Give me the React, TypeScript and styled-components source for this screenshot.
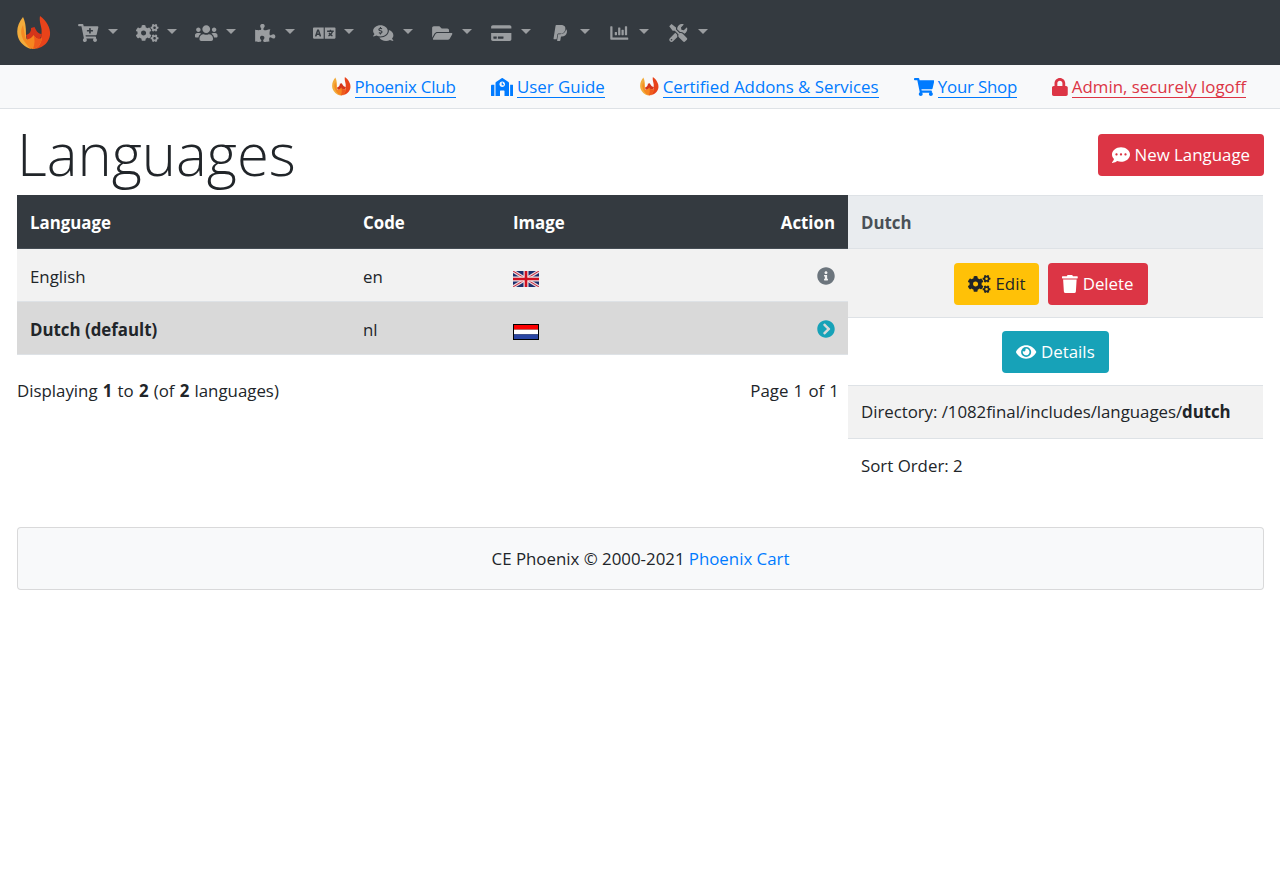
import React from 'react';
import styled, { createGlobalStyle } from 'styled-components';
import {
  FaCartPlus,
  FaCogs,
  FaUsers,
  FaPuzzlePiece,
  FaLanguage,
  FaCommentsDollar,
  FaFolderOpen,
  FaCreditCard,
  FaPaypal,
  FaChartBar,
  FaTools,
  FaSchool,
  FaShoppingCart,
  FaLock,
  FaCommentDots,
  FaTrash,
  FaEye,
  FaInfoCircle,
  FaChevronCircleRight,
} from 'react-icons/fa';

const GlobalStyle = createGlobalStyle`
  html, body {
    margin: 0;
    background: #fff;
  }
  body {
    font-family: "Open Sans", "Liberation Sans", sans-serif;
    font-size: 16.85px;
    line-height: 26px;
    color: #212529;
  }
  * { box-sizing: border-box; }
`;

const Logo: React.FC<{ size: number }> = ({ size }) => (
  <svg width={size} height={size} viewBox="0 0 34 34">
    <path d="M6 1 C1 7 -1 14 1 21 C3 27 8 31 14 33 C12 27 9 24 9 19 C9 14 9 7 6 1Z" fill="#f2ac3c" />
    <path d="M6 9 C3 14 4 20 7 25 C9 28 11 30 13 31 C10 26 8 22 7.5 17 Z" fill="#f58a22" />
    <path d="M23 0 C22 5 24 9 24.5 13 C25 19 24 26 19 33 C27 31 32 26 33 19 C34 12 29 4 23 0Z" fill="#e8431a" />
    <path d="M9 19 C12 18 13 17 14 14 L14 12 L17.5 11 L19 14 C20 16 22 18 25 18 L23 23 L10 23Z" fill="#d4351a" />
    <path d="M8 23 C11 24 14 23 16.5 19 C19 23 22 24 25 22 C24 28 21 33 16 33 C12 33 9 28 8 23Z" fill="#f6861f" />
    <path d="M16.5 19 C19 23 22 24 25 22 C24 28 21 32 16 33 C18 28 18 23 16.5 19Z" fill="#ee5a1c" />
  </svg>
);

const FlagSvg = styled.svg`
  display: block;
  width: 26px;
  height: 16px;
  margin-top: 3px;
`;

const UkFlag: React.FC = () => (
  <FlagSvg viewBox="0 0 26 16">
    <rect width="26" height="16" fill="#1c2f6e" />
    <path d="M0 0 L26 16 M26 0 L0 16" stroke="#e9d5da" strokeWidth="3.2" />
    <path d="M0 0 L26 16 M26 0 L0 16" stroke="#c8283c" strokeWidth="1" />
    <path d="M13 0 V16 M0 8 H26" stroke="#efe3e5" strokeWidth="5" />
    <path d="M13 0 V16 M0 8 H26" stroke="#cf1020" strokeWidth="2.6" />
  </FlagSvg>
);

const NlFlag: React.FC = () => (
  <FlagSvg viewBox="0 0 26 16">
    <rect width="26" height="16" fill="#000" />
    <rect x="1" y="1" width="24" height="4.6" fill="#fb0000" />
    <rect x="1" y="5.6" width="24" height="4.8" fill="#fff" />
    <rect x="1" y="10.4" width="24" height="4.6" fill="#2a46a4" />
  </FlagSvg>
);

const Navbar = styled.nav`
  display: flex;
  align-items: center;
  height: 65px;
  padding: 0 17px;
  background: #343a40;
`;

const Brand = styled.div`
  display: flex;
  margin-right: 26px;
`;

const NavItem = styled.div`
  display: flex;
  align-items: center;
  flex: 0 0 59px;
  color: rgba(255, 255, 255, 0.5);
  svg {
    width: 22.5px;
    height: 18px;
  }
`;

const Caret = styled.span`
  width: 0;
  height: 0;
  margin: 0 0 2px 8.5px;
  border-top: 5px solid rgba(255, 255, 255, 0.5);
  border-left: 5px solid transparent;
  border-right: 5px solid transparent;
`;

const SubBar = styled.div`
  display: flex;
  justify-content: flex-end;
  align-items: center;
  gap: 35px;
  height: 44px;
  padding: 0 34px 0 0;
  background: #f8f9fa;
  border-bottom: 1px solid #dee2e6;
`;

const SubLink = styled.a<{ $danger?: boolean; $iconWidth?: number }>`
  display: flex;
  align-items: center;
  gap: 4px;
  color: ${p => (p.$danger ? '#dc3545' : '#007bff')};
  svg {
    flex: none;
    width: ${p => p.$iconWidth ?? 19}px;
    height: ${p => (p.$iconWidth ? 18 : 19)}px;
  }
`;

const LinkText = styled.span<{ $tight?: boolean }>`
  padding-top: 1px;
  line-height: 21px;
  letter-spacing: ${p => (p.$tight ? '-0.2px' : 'normal')};
  border-bottom: 1px solid currentColor;
`;

const Main = styled.main`
  padding: 0 16px 0 17px;
`;

const TitleRow = styled.div`
  display: flex;
  justify-content: space-between;
  align-items: center;
  height: 86px;
  padding-top: 4px;
`;

const Title = styled.h1`
  margin: 0;
  font-size: 58px;
  font-weight: 300;
  line-height: 64px;
  color: #212529;
`;

const Button = styled.a<{ $kind: 'danger' | 'warning' | 'info'; $iconWidth: number }>`
  display: inline-flex;
  align-items: center;
  gap: 4.5px;
  height: 42px;
  padding: 0 14px;
  border-radius: 4px;
  color: ${p => (p.$kind === 'warning' ? '#212529' : '#fff')};
  background: ${p =>
    p.$kind === 'danger' ? '#dc3545' : p.$kind === 'warning' ? '#ffc107' : '#17a2b8'};
  svg {
    flex: none;
    width: ${p => p.$iconWidth}px;
    height: 18px;
  }
`;

const NewButton = styled(Button)`
  margin-top: 2px;
`;

const DeleteButton = styled(Button)`
  margin-right: 9px;
`;

const Columns = styled.div`
  display: flex;
  align-items: flex-start;
  margin-right: 1px;
`;

const LeftCol = styled.div`
  flex: 0 0 831px;
`;

const RightCol = styled.div`
  flex: 1;
`;

const Row = styled.div<{ $variant?: 'head' | 'odd' | 'selected' }>`
  display: grid;
  grid-template-columns: 333px 150px 1fr 120px;
  align-items: center;
  height: ${p => (p.$variant === 'head' ? '54px' : '53px')};
  padding: ${p => (p.$variant === 'head' ? '2px' : '4px')} 13px 0;
  font-weight: ${p => (p.$variant === 'odd' ? 400 : 700)};
  color: ${p => (p.$variant === 'head' ? '#fff' : '#212529')};
  background: ${p =>
    p.$variant === 'head' ? '#343a40' : p.$variant === 'selected' ? '#d9d9d9' : '#f2f2f2'};
  border-bottom: 1px solid ${p => (p.$variant === 'head' ? '#454d55' : '#dee2e6')};
`;

const Cell = styled.div<{ $right?: boolean; $plain?: boolean }>`
  display: flex;
  justify-content: ${p => (p.$right ? 'flex-end' : 'flex-start')};
  font-weight: ${p => (p.$plain ? 400 : 'inherit')};
`;

const ActionIcon = styled.span<{ $color: string }>`
  display: flex;
  margin-bottom: 2px;
  color: ${p => p.$color};
  font-size: 18px;
`;

const Paging = styled.div`
  display: flex;
  justify-content: space-between;
  padding: 23px 9px 0 0;
  word-spacing: 0.8px;
`;

const PanelHead = styled.div`
  display: flex;
  align-items: center;
  height: 54px;
  padding: 1px 13px 0;
  font-weight: 700;
  color: #495057;
  background: #e9ecef;
  border-top: 1px solid #dee2e6;
  border-bottom: 1px solid #dee2e6;
`;

const PanelRow = styled.div<{ $striped?: boolean; $center?: boolean; $height: number; $top?: number }>`
  display: flex;
  align-items: center;
  justify-content: ${p => (p.$center ? 'center' : 'flex-start')};
  gap: 9px;
  height: ${p => p.$height}px;
  padding: ${p => p.$top ?? 0}px 13px 0;
  background: ${p => (p.$striped ? '#f2f2f2' : '#fff')};
  border-bottom: 1px solid #dee2e6;
  &:last-child { border-bottom: 0; }
`;

const DirText = styled.span`
  white-space: pre;
  letter-spacing: -0.04px;
`;

const Footer = styled.footer`
  display: flex;
  justify-content: center;
  align-items: center;
  gap: 0.25em;
  height: 63px;
  margin-top: 35px;
  background: #f8f9fa;
  border: 1px solid rgba(0, 0, 0, 0.125);
  border-radius: 4px;
  a { color: #007bff; }
`;

const navIcons = [
  FaCartPlus,
  FaCogs,
  FaUsers,
  FaPuzzlePiece,
  FaLanguage,
  FaCommentsDollar,
  FaFolderOpen,
  FaCreditCard,
  FaPaypal,
  FaChartBar,
  FaTools,
];

const App: React.FC = () => (
  <>
    <GlobalStyle />
    <Navbar>
      <Brand>
        <Logo size={34} />
      </Brand>
      {navIcons.map((Icon, i) => (
        <NavItem key={i}>
          <Icon />
          <Caret />
        </NavItem>
      ))}
    </Navbar>
    <SubBar>
      <SubLink>
        <Logo size={19} />
        <LinkText $tight>Phoenix Club</LinkText>
      </SubLink>
      <SubLink $iconWidth={22.5}>
        <FaSchool />
        <LinkText>User Guide</LinkText>
      </SubLink>
      <SubLink>
        <Logo size={19} />
        <LinkText>Certified Addons &amp; Services</LinkText>
      </SubLink>
      <SubLink $iconWidth={20.25}>
        <FaShoppingCart />
        <LinkText $tight>Your Shop</LinkText>
      </SubLink>
      <SubLink $danger $iconWidth={15.75}>
        <FaLock />
        <LinkText>Admin, securely logoff</LinkText>
      </SubLink>
    </SubBar>
    <Main>
      <TitleRow>
        <Title>Languages</Title>
        <NewButton $kind="danger" $iconWidth={18}>
          <FaCommentDots />
          New Language
        </NewButton>
      </TitleRow>
      <Columns>
        <LeftCol>
          <div>
            <Row $variant="head">
              <Cell>Language</Cell>
              <Cell>Code</Cell>
              <Cell>Image</Cell>
              <Cell $right>Action</Cell>
            </Row>
            <Row $variant="odd">
              <Cell>English</Cell>
              <Cell>en</Cell>
              <Cell><UkFlag /></Cell>
              <Cell $right>
                <ActionIcon $color="#6c757d"><FaInfoCircle /></ActionIcon>
              </Cell>
            </Row>
            <Row $variant="selected">
              <Cell>Dutch (default)</Cell>
              <Cell $plain>nl</Cell>
              <Cell><NlFlag /></Cell>
              <Cell $right>
                <ActionIcon $color="#17a2b8"><FaChevronCircleRight /></ActionIcon>
              </Cell>
            </Row>
          </div>
          <Paging>
            <span>Displaying <b>1</b> to <b>2</b> (of <b>2</b> languages)</span>
            <span>Page 1 of 1</span>
          </Paging>
        </LeftCol>
        <RightCol>
          <PanelHead>Dutch</PanelHead>
          <PanelRow $striped $center $height={69} $top={2}>
            <Button $kind="warning" $iconWidth={22.5}>
              <FaCogs />
              Edit
            </Button>
            <DeleteButton $kind="danger" $iconWidth={15.75}>
              <FaTrash />
              Delete
            </DeleteButton>
          </PanelRow>
          <PanelRow $center $height={68}>
            <Button $kind="info" $iconWidth={20.25}>
              <FaEye />
              Details
            </Button>
          </PanelRow>
          <PanelRow $striped $height={53}>
            <DirText>Directory: /1082final/includes/languages/<b>dutch</b></DirText>
          </PanelRow>
          <PanelRow $height={53}>Sort Order: 2</PanelRow>
        </RightCol>
      </Columns>
      <Footer>
        <span>CE Phoenix © 2000-2021</span>
        <a>Phoenix Cart</a>
      </Footer>
    </Main>
  </>
);

export default App;
